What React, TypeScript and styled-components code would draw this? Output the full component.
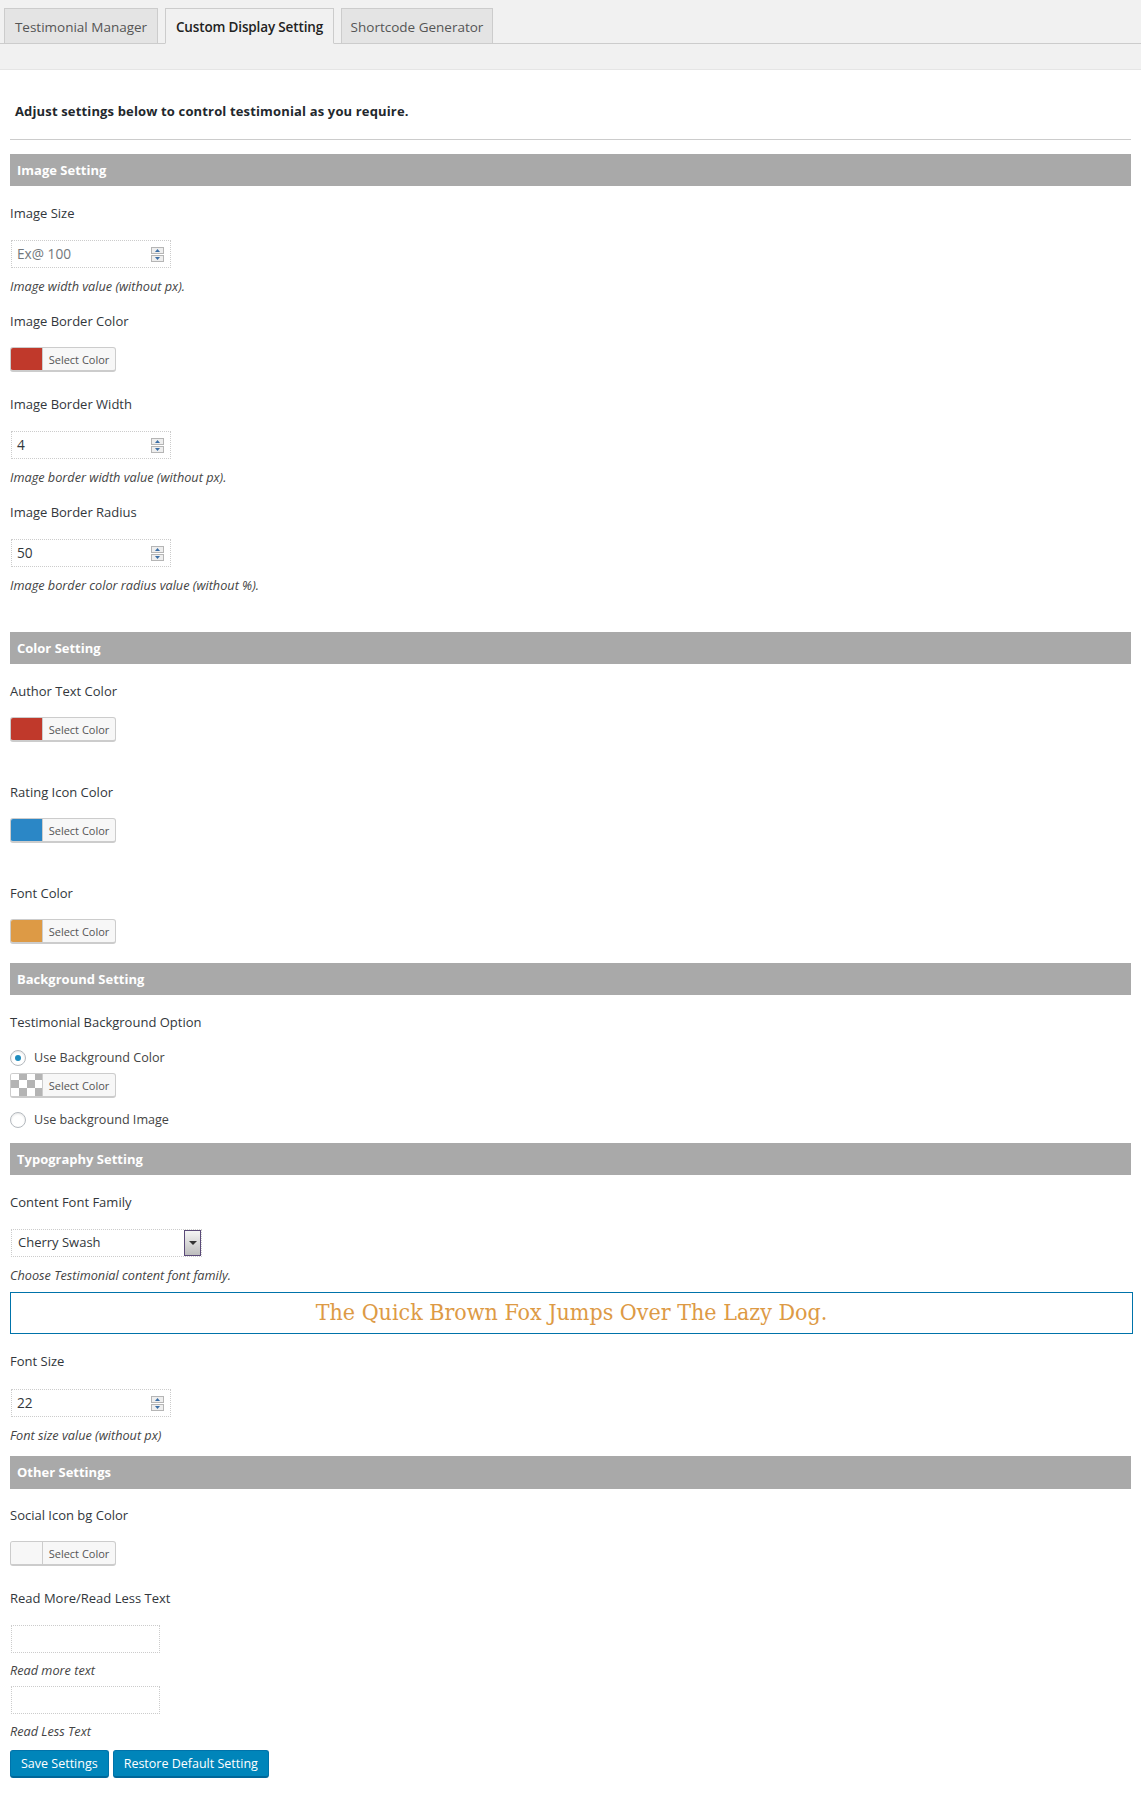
import React from "react";
import styled, { createGlobalStyle } from "styled-components";

const Global = createGlobalStyle`
  html, body { margin: 0; padding: 0; background: #fff; }
  body { font-family: "Open Sans", "Noto Sans", sans-serif; font-size: 13px; line-height: 18px; color: #444; }
`;

const Page = styled.div`
  width: 1141px;
  height: 1799px;
  overflow: hidden;
`;

const TabBar = styled.div`
  height: 69px;
  background: #f1f1f1;
  border-bottom: 1px solid #e5e5e5;
`;

const TabRow = styled.div`
  height: 44px;
  box-sizing: border-box;
  padding: 8px 0 0 4px;
  display: flex;
  gap: 7px;
  border-bottom: 1px solid #ccc;
`;

const Tab = styled.div<{ $active?: boolean; $w: number }>`
  width: ${(p) => p.$w}px;
  box-sizing: border-box;
  height: ${(p) => (p.$active ? 36 : 35)}px;
  border: 1px solid #ccc;
  border-bottom: ${(p) => (p.$active ? "1px solid #f1f1f1" : "none")};
  background: ${(p) => (p.$active ? "#f1f1f1" : "#e4e4e4")};
  color: ${(p) => (p.$active ? "#222" : "#555")};
  font-size: 13.5px;
  font-weight: ${(p) => (p.$active ? 600 : 400)};
  letter-spacing: ${(p) => (p.$active ? "-0.15px" : "0")};
  line-height: 36px;
  text-align: center;
  white-space: nowrap;
`;

const Content = styled.div`
  padding: 0 10px;
`;

const Intro = styled.div`
  margin: 32px 0 0 5px;
  font-size: 13px;
  font-weight: 700;
  letter-spacing: 0.15px;
  line-height: 18px;
  color: #23282d;
`;

const Rule = styled.hr`
  margin: 19px 0 14px;
  border: 0;
  border-top: 1px solid #ccc;
  width: 1121px;
`;

const SectionBar = styled.h2<{ $top?: number; $h?: number }>`
  margin: ${(p) => p.$top ?? 0}px 0 0;
  width: 1121px;
  height: ${(p) => p.$h ?? 32}px;
  box-sizing: border-box;
  padding-left: 7px;
  background: #a9a9a9;
  color: #fff;
  font-size: 13px;
  font-weight: 700;
  line-height: 33px;
`;

const Label = styled.div<{ $top?: number; $bottom?: number }>`
  margin: ${(p) => p.$top ?? 18}px 0 ${(p) => p.$bottom ?? 18}px;
  color: #32373c;
  font-size: 13px;
  font-weight: 400;
  line-height: 18px;
`;

const Hint = styled.p<{ $top?: number }>`
  margin: ${(p) => p.$top ?? 9}px 0 0;
  font-size: 12.7px;
  font-style: italic;
  line-height: 18px;
  color: #444;
`;

const InputBox = styled.div<{ $w?: number; $top?: number }>`
  width: ${(p) => p.$w ?? 160}px;
  height: 28px;
  margin: ${(p) => p.$top ?? 0}px 0 0 1px;
  box-sizing: border-box;
  padding: 0 6px 0 5px;
  display: flex;
  align-items: center;
  justify-content: space-between;
  border: 1px dotted #ccc;
  background: #fff;
  font-size: 13.7px;
  color: #32373c;
`;

const Placeholder = styled.span`
  color: #72777c;
`;

const Spinner = styled.span`
  display: flex;
  flex-direction: column;
  gap: 1px;
  width: 13px;
`;

const SpinPart = styled.span`
  height: 5px;
  display: flex;
  align-items: center;
  justify-content: center;
  background: #eee;
  border: 1px solid #b5b5b5;
`;

const Arrow = styled.svg`
  width: 5px;
  height: 3px;
  display: block;
`;

const Stepper = () => (
  <Spinner>
    <SpinPart>
      <Arrow viewBox="0 0 5 3"><path d="M2.5 0L5 3H0z" fill="#3b6ea5" /></Arrow>
    </SpinPart>
    <SpinPart>
      <Arrow viewBox="0 0 5 3"><path d="M0 0h5L2.5 3z" fill="#3b6ea5" /></Arrow>
    </SpinPart>
  </Spinner>
);

const ColorButton = styled.div<{ $top?: number }>`
  margin-top: ${(p) => p.$top ?? 0}px;
  width: 106px;
  height: 25px;
  box-sizing: border-box;
  display: flex;
  border: 1px solid #ccc;
  border-bottom-width: 2px;
  border-radius: 3px;
  background: #f7f7f7;
  overflow: hidden;
`;

const Swatch = styled.span<{ $color?: string; $checker?: boolean }>`
  width: 31px;
  flex: none;
  border-right: 1px solid #ccc;
  background-color: ${(p) => p.$color ?? "#f7f7f7"};
  ${(p) =>
    p.$checker
      ? `background-image: conic-gradient(#b4b4b4 25%, #fff 0 50%, #b4b4b4 0 75%, #fff 0); background-size: 16px 16px; background-position: 0 -2px;`
      : ""}
`;

const ColorText = styled.span`
  flex: 1;
  text-align: center;
  font-size: 11px;
  line-height: 23px;
  color: #555;
`;

const ColorPick = ({ color, checker, top }: { color?: string; checker?: boolean; top?: number }) => (
  <ColorButton $top={top}>
    <Swatch $color={color} $checker={checker} />
    <ColorText>Select Color</ColorText>
  </ColorButton>
);

const NumberInput = ({ value, placeholder }: { value?: string; placeholder?: string }) => (
  <InputBox>
    {placeholder ? <Placeholder>{placeholder}</Placeholder> : <span>{value}</span>}
    <Stepper />
  </InputBox>
);

const RadioRow = styled.div<{ $top?: number }>`
  margin-top: ${(p) => p.$top ?? 0}px;
  display: flex;
  align-items: center;
  gap: 8px;
  height: 18px;
  font-size: 12.6px;
  line-height: 20px;
  color: #444;
`;

const RadioDot = styled.span<{ $on?: boolean }>`
  width: 16px;
  height: 16px;
  box-sizing: border-box;
  border: 1px solid #b4b9be;
  border-radius: 50%;
  background: #fff;
  box-shadow: inset 0 1px 2px rgba(0, 0, 0, 0.1);
  display: flex;
  align-items: center;
  justify-content: center;
  &::after {
    content: "";
    display: ${(p) => (p.$on ? "block" : "none")};
    width: 6px;
    height: 6px;
    border-radius: 50%;
    background: #1e8cbe;
  }
`;

const SelectBox = styled.div`
  margin-left: 1px;
  width: 191px;
  height: 28px;
  box-sizing: border-box;
  display: flex;
  justify-content: space-between;
  border: 1px dotted #ccc;
  font-size: 13px;
  line-height: 25px;
  padding-left: 6px;
  color: #32373c;
`;

const SelectArrow = styled.span`
  width: 17px;
  height: 26px;
  box-sizing: border-box;
  border: 1px solid #5a4a78;
  background: linear-gradient(#f4f4f4, #bdbdbd);
  display: flex;
  align-items: center;
  justify-content: center;
  &::after {
    content: "";
    border-top: 4px solid #333;
    border-left: 4px solid transparent;
    border-right: 4px solid transparent;
  }
`;

const Preview = styled.div`
  margin-top: 8px;
  width: 1123px;
  height: 42px;
  box-sizing: border-box;
  border: 1px solid #0073aa;
  text-align: center;
  font-family: "DejaVu Serif Condensed", "DejaVu Serif", serif;
  font-stretch: condensed;
  font-size: 23px;
  line-height: 39px;
  color: #dd9a45;
`;

const Actions = styled.div`
  margin-top: 10px;
  display: flex;
  gap: 4px;
`;

const Primary = styled.div`
  height: 28px;
  box-sizing: border-box;
  padding: 0 10px;
  background: #0085ba;
  border: 1px solid #0073aa;
  border-bottom: 2px solid #006799;
  border-radius: 3px;
  color: #fff;
  font-size: 12.5px;
  line-height: 26px;
  white-space: nowrap;
`;

export default function App() {
  return (
    <Page>
      <Global />
      <TabBar>
        <TabRow>
          <Tab $w={154}>Testimonial Manager</Tab>
          <Tab $w={169} $active>Custom Display Setting</Tab>
          <Tab $w={152}>Shortcode Generator</Tab>
        </TabRow>
      </TabBar>
      <Content>
        <Intro>Adjust settings below to control testimonial as you require.</Intro>
        <Rule />

        <SectionBar>Image Setting</SectionBar>
        <Label>Image Size</Label>
        <NumberInput placeholder="Ex@ 100" />
        <Hint>Image width value (without px).</Hint>
        <Label $top={17} $bottom={17}>Image Border Color</Label>
        <ColorPick color="#c0392b" />
        <Label $top={23}>Image Border Width</Label>
        <NumberInput value="4" />
        <Hint>Image border width value (without px).</Hint>
        <Label $top={17}>Image Border Radius</Label>
        <NumberInput value="50" />
        <Hint>Image border color radius value (without %).</Hint>

        <SectionBar $top={38}>Color Setting</SectionBar>
        <Label $bottom={17}>Author Text Color</Label>
        <ColorPick color="#c0392b" />
        <Label $top={41} $bottom={17}>Rating Icon Color</Label>
        <ColorPick color="#2b87c6" />
        <Label $top={41} $bottom={17}>Font Color</Label>
        <ColorPick color="#dd9a45" />

        <SectionBar $top={19}>Background Setting</SectionBar>
        <Label>Testimonial Background Option</Label>
        <RadioRow><RadioDot $on />Use Background Color</RadioRow>
        <ColorPick checker top={6} />
        <RadioRow $top={13}><RadioDot />Use background Image</RadioRow>

        <SectionBar $top={14}>Typography Setting</SectionBar>
        <Label>Content Font Family</Label>
        <SelectBox>Cherry Swash<SelectArrow /></SelectBox>
        <Hint>Choose Testimonial content font family.</Hint>
        <Preview>The Quick Brown Fox Jumps Over The Lazy Dog.</Preview>
        <Label $bottom={19}>Font Size</Label>
        <NumberInput value="22" />
        <Hint>Font size value (without px)</Hint>

        <SectionBar $top={12} $h={33}>Other Settings</SectionBar>
        <Label $top={17} $bottom={17}>Social Icon bg Color</Label>
        <ColorPick />
        <Label $top={23}>Read More/Read Less Text</Label>
        <InputBox $w={149} />
        <Hint $top={8}>Read more text</Hint>
        <InputBox $w={149} $top={7} />
        <Hint $top={8}>Read Less Text</Hint>
        <Actions>
          <Primary>Save Settings</Primary>
          <Primary>Restore Default Setting</Primary>
        </Actions>
      </Content>
    </Page>
  );
}
